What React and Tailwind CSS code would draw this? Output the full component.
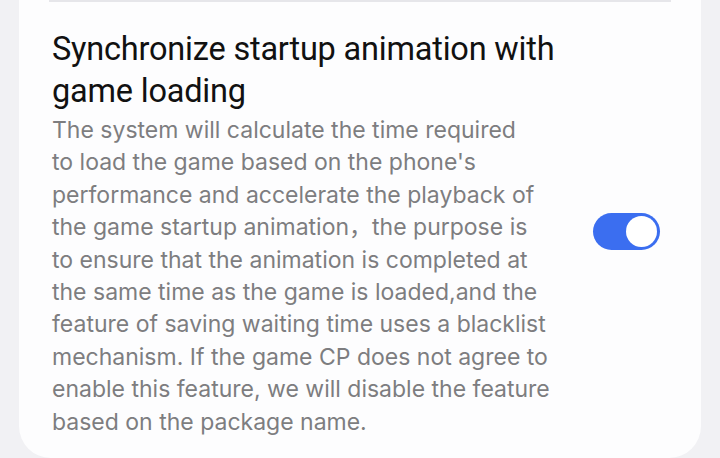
const TITLE = ['Synchronize startup animation with', 'game loading'];

const DESCRIPTION = [
  'The system will calculate the time required',
  "to load the game based on the phone's",
  'performance and accelerate the playback of',
  'the game startup animation，the purpose is',
  'to ensure that the animation is completed at',
  'the same time as the game is loaded,and the',
  'feature of saving waiting time uses a blacklist',
  'mechanism. If the game CP does not agree to',
  'enable this feature, we will disable the feature',
  'based on the package name.',
];

function Toggle({ on }) {
  return (
    <div
      className={`flex h-[37px] w-[67px] shrink-0 items-center rounded-full px-[3px] ${
        on ? 'justify-end bg-[#3b6ef0]' : 'justify-start bg-[#c9c9ce]'
      }`}
    >
      <div className="h-[31px] w-[31px] rounded-full bg-white" />
    </div>
  );
}

export default function App() {
  return (
    <div className="min-h-[458px] bg-[#f1f1f4] px-[19px] font-['Roboto','Noto_Sans_CJK_SC',sans-serif]">
      <div className="rounded-b-[32px] bg-[#fdfdfe] pb-[20px]">
        <div className="mx-[30px] h-[2px] bg-[#e6e6ea]" />
        <div className="flex items-center pl-[33px] pr-[41px] pt-[26px]">
          <div className="flex-1">
            <h2 className="text-[32.5px] leading-[42px] tracking-[-0.2px] text-[#111]">
              {TITLE.map((line) => (
                <span key={line} className="block">{line}</span>
              ))}
            </h2>
            <p className="mt-[2px] font-['Inter','Noto_Sans_CJK_SC',sans-serif] text-[23px] leading-[32.4px] text-[#7d7d80]">
              {DESCRIPTION.map((line) => (
                <span key={line} className="block whitespace-nowrap">{line}</span>
              ))}
            </p>
          </div>
          <div className="-mt-[4px]">
            <Toggle on />
          </div>
        </div>
      </div>
    </div>
  );
}
